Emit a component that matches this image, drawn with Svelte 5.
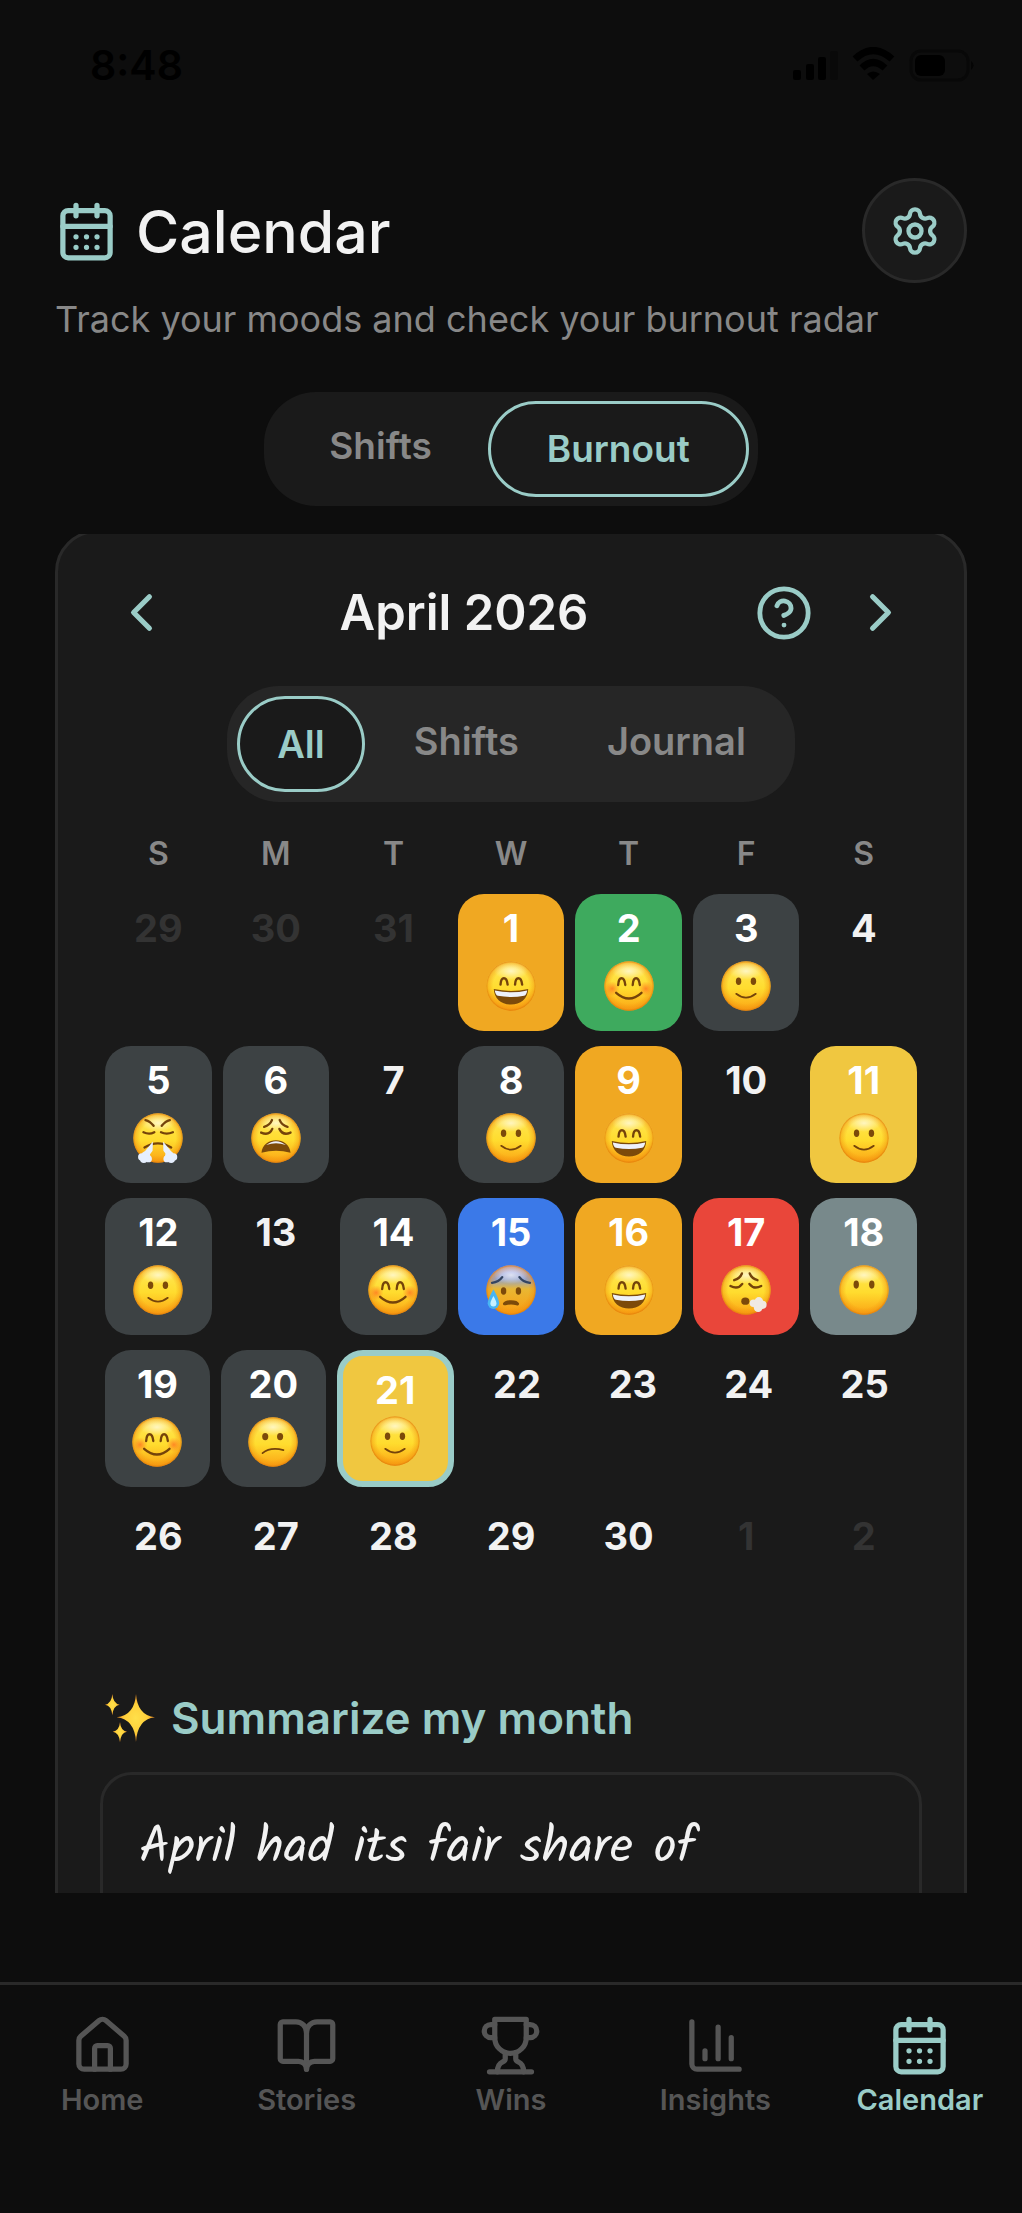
<script>
  let view = $state('Burnout');
  let filter = $state('All');

  const views = ['Shifts', 'Burnout'];
  const filters = ['All', 'Shifts', 'Journal'];
  const weekdays = ['S', 'M', 'T', 'W', 'T', 'F', 'S'];

  const d = (n, mood = '', tone = '', flag = '') => ({ n, mood, tone, flag });
  const weeks = [
    [d(29, '', '', 'out'), d(30, '', '', 'out'), d(31, '', '', 'out'), d(1, 'grin', 'orange'), d(2, 'blush', 'green'), d(3, 'smile', 'slate'), d(4)],
    [d(5, 'huff', 'slate'), d(6, 'weary', 'slate'), d(7), d(8, 'smile', 'slate'), d(9, 'grin', 'orange'), d(10), d(11, 'smile', 'yellow')],
    [d(12, 'smile', 'slate'), d(13), d(14, 'blush', 'slate'), d(15, 'anxious', 'blue'), d(16, 'grin', 'orange'), d(17, 'exhale', 'red'), d(18, 'blank', 'gray')],
    [d(19, 'blush', 'slate'), d(20, 'confused', 'slate'), d(21, 'smile', 'yellow', 'today'), d(22), d(23), d(24), d(25)],
    [d(26), d(27), d(28), d(29), d(30), d(1, '', '', 'out'), d(2, '', '', 'out')]
  ];

  const tabs = [
    { label: 'Home', icon: 'home' },
    { label: 'Stories', icon: 'book' },
    { label: 'Wins', icon: 'trophy' },
    { label: 'Insights', icon: 'chart' },
    { label: 'Calendar', icon: 'calendar', active: true }
  ];
</script>

{#snippet icon(name)}
  <svg class="icon" viewBox="0 0 24 24" aria-hidden="true">
    {#if name === 'calendar'}
      <path d="M8 2v4M16 2v4M3 10h18" />
      <rect x="3" y="4" width="18" height="18" rx="2" />
      <path d="M8 14h.01M12 14h.01M16 14h.01M8 18h.01M12 18h.01M16 18h.01" />
    {:else if name === 'home'}
      <path d="M15 21v-8a1 1 0 0 0-1-1h-4a1 1 0 0 0-1 1v8" />
      <path d="M3 10a2 2 0 0 1 .709-1.528l7-5.999a2 2 0 0 1 2.582 0l7 5.999A2 2 0 0 1 21 10v9a2 2 0 0 1-2 2H5a2 2 0 0 1-2-2z" />
    {:else if name === 'book'}
      <path d="M12 7v14" />
      <path d="M3 18a1 1 0 0 1-1-1V4a1 1 0 0 1 1-1h5a4 4 0 0 1 4 4 4 4 0 0 1 4-4h5a1 1 0 0 1 1 1v13a1 1 0 0 1-1 1h-6a3 3 0 0 0-3 3 3 3 0 0 0-3-3z" />
    {:else if name === 'trophy'}
      <path d="M6 9H4.5a2.5 2.5 0 0 1 0-5H6M18 9h1.5a2.5 2.5 0 0 0 0-5H18M4 22h16" />
      <path d="M10 14.66V17c0 .55-.47.98-.97 1.21C7.85 18.75 7 20.24 7 22M14 14.66V17c0 .55.47.98.97 1.21C16.15 18.75 17 20.24 17 22" />
      <path d="M18 2H6v7a6 6 0 0 0 12 0V2Z" />
    {:else if name === 'chart'}
      <path d="M3 3v16a2 2 0 0 0 2 2h16M18 17V9M13 17V5M8 17v-3" />
    {:else if name === 'left'}
      <path d="m15 18-6-6 6-6" />
    {:else if name === 'right'}
      <path d="m9 18 6-6-6-6" />
    {:else if name === 'help'}
      <circle cx="12" cy="12" r="10" />
      <path d="M9.09 9a3 3 0 0 1 5.83 1c0 2-3 3-3 3M12 17h.01" />
    {:else if name === 'gear'}
      <path d="M9.671 4.136a2.34 2.34 0 0 1 4.659 0 2.34 2.34 0 0 0 3.319 1.915 2.34 2.34 0 0 1 2.33 4.033 2.34 2.34 0 0 0 0 3.831 2.34 2.34 0 0 1-2.33 4.033 2.34 2.34 0 0 0-3.319 1.915 2.34 2.34 0 0 1-4.659 0 2.34 2.34 0 0 0-3.32-1.915 2.34 2.34 0 0 1-2.33-4.033 2.34 2.34 0 0 0 0-3.831A2.34 2.34 0 0 1 6.35 6.051a2.34 2.34 0 0 0 3.319-1.915" />
      <circle cx="12" cy="12" r="3" />
    {/if}
  </svg>
{/snippet}

{#snippet face(mood)}
  <svg class="face" viewBox="0 0 148 148" role="img" aria-label={mood}>
    <circle cx="74" cy="74" r="73" fill={mood === 'anxious' ? 'url(#chill)' : 'url(#skin)'} />
    <circle cx="74" cy="74" r="73" fill="url(#rim)" />
    <ellipse cx="74" cy="30" rx="50" ry="26" fill="url(#shine)" />
    {#if mood === 'grin'}
      <path class="line" d="M43 70Q44 51 53 51T64 70M86 70Q87 51 96 51T107 70" />
      <path class="dark" d="M23 83Q74 94 125 83C124 112 102 129 74 129S24 112 23 83Z" />
      <path fill="#eef1fb" d="M26 87Q74 98 122 87Q120 100 113 103Q74 110 35 103Q28 100 26 87Z" />
    {:else if mood === 'blush'}
      <circle cx="24" cy="82" r="22" fill="url(#cheek)" />
      <circle cx="124" cy="82" r="22" fill="url(#cheek)" />
      <path class="line" d="M42 71Q43 51 52 51T63 71M85 71Q86 51 95 51T106 71" />
      <path class="line" d="M36 94Q74 128 111 94" />
    {:else if mood === 'smile'}
      <ellipse class="dark" cx="52" cy="60" rx="8" ry="11" />
      <ellipse class="dark" cx="96" cy="60" rx="8" ry="11" />
      <path class="line thin" d="M45 97Q74 120 103 97" />
    {:else if mood === 'huff'}
      <path class="line" d="M37 21Q50 24 61 38M109 21Q96 24 85 38" />
      <path class="line" d="M31 57Q48 65 63 57M83 57Q99 65 118 57" />
      <path class="line" d="M34 102Q74 78 113 102" />
      <path fill="#e8f1ff" d="M59 84L58 112L46 128L28 122ZM89 84L90 112L102 128L120 122Z" />
      <g fill="#e6effe">
        <circle cx="26" cy="130" r="11" /><circle cx="38" cy="126" r="13" /><circle cx="46" cy="136" r="10" /><circle cx="32" cy="137" r="11" />
        <circle cx="120" cy="130" r="11" /><circle cx="108" cy="126" r="13" /><circle cx="100" cy="136" r="10" /><circle cx="113" cy="137" r="11" />
      </g>
    {:else if mood === 'weary'}
      <path class="line" d="M39 41Q56 36 62 21M85 21Q91 36 108 41" />
      <path class="line" d="M30 58Q54 68 63 47M84 47Q94 68 117 58" />
      <path class="dark" d="M31 118C34 68 114 68 117 118Q74 106 31 118Z" />
      <path fill="#eef1fb" d="M45 95Q74 72 103 95Q74 84 45 95Z" />
    {:else if mood === 'anxious'}
      <path class="line cold" d="M18 53Q38 50 48 36M99 36Q109 50 130 53" />
      <ellipse class="dark" cx="52" cy="77" rx="8" ry="11" />
      <ellipse class="dark" cx="96" cy="77" rx="8" ry="11" />
      <path class="dark" d="M50 114Q54 104 74 104T98 114Q98 122 90 119Q74 115 58 119Q50 121 50 114Z" />
      <path fill="#48b5f3" d="M22 72Q38 100 39 113A17 17 0 0 1 5 113Q6 100 22 72Z" />
      <path fill="#c7f0ff" d="M22 92Q31 108 31 114A9 9 0 0 1 13 114Q13 108 22 92Z" />
    {:else if mood === 'exhale'}
      <path class="line" d="M39 45Q56 40 62 25M85 25Q91 40 108 45" />
      <path class="line" d="M28 62Q50 74 63 56M84 56Q98 74 119 62" />
      <ellipse class="dark" cx="72" cy="107" rx="12" ry="11" />
      <g fill="#f0e9e2">
        <circle cx="96" cy="113" r="11" /><circle cx="112" cy="108" r="13" /><circle cx="123" cy="118" r="12" /><circle cx="110" cy="126" r="13" />
      </g>
    {:else if mood === 'blank'}
      <ellipse class="dark" cx="51" cy="58" rx="8" ry="12" />
      <ellipse class="dark" cx="97" cy="58" rx="8" ry="12" />
    {:else if mood === 'confused'}
      <ellipse class="dark" cx="51" cy="58" rx="9" ry="11" />
      <ellipse class="dark" cx="95" cy="58" rx="9" ry="11" />
      <path class="line thin" d="M43 107Q66 88 105 98" />
    {/if}
  </svg>
{/snippet}

<div class="app">
  <svg class="defs" aria-hidden="true">
    <defs>
      <linearGradient id="skin" x1="0" y1="0" x2="0" y2="1">
        <stop offset="0" stop-color="#ffe95a" /><stop offset=".55" stop-color="#ffdc2e" /><stop offset="1" stop-color="#fba214" />
      </linearGradient>
      <linearGradient id="chill" x1="0" y1="0" x2="0" y2="1">
        <stop offset="0" stop-color="#b4b6fa" /><stop offset=".28" stop-color="#94a3cc" /><stop offset=".48" stop-color="#e9b733" /><stop offset="1" stop-color="#fb9d12" />
      </linearGradient>
      <radialGradient id="rim">
        <stop offset=".72" stop-color="#f08a08" stop-opacity="0" /><stop offset=".92" stop-color="#ee8a0c" stop-opacity=".4" /><stop offset="1" stop-color="#dd7408" stop-opacity=".8" />
      </radialGradient>
      <radialGradient id="shine">
        <stop offset="0" stop-color="#fff" stop-opacity=".65" /><stop offset="1" stop-color="#fff" stop-opacity="0" />
      </radialGradient>
      <radialGradient id="cheek">
        <stop offset="0" stop-color="#ff5a1e" stop-opacity=".65" /><stop offset="1" stop-color="#ff6a20" stop-opacity="0" />
      </radialGradient>
      <radialGradient id="gold">
        <stop offset="0" stop-color="#ffe04a" /><stop offset=".6" stop-color="#ffcf3a" /><stop offset="1" stop-color="#f08a20" />
      </radialGradient>
    </defs>
  </svg>

  <div class="status">
    <span class="clock">8:48</span>
    <svg class="signals" viewBox="0 0 184 36" aria-hidden="true">
      <rect x="2" y="23" width="8" height="10" rx="2" />
      <rect x="15" y="17" width="8" height="16" rx="2" />
      <rect x="27" y="10" width="8" height="23" rx="2" />
      <rect class="faint" x="39" y="4" width="8" height="29" rx="2" />
      <path class="arc" d="M64 12Q82-5 101 12M71 21Q82 10 94 21" />
      <path d="M82 33L76 27Q82 22 89 27Z" />
      <rect class="shell" x="120" y="4" width="57" height="29" rx="10" />
      <rect x="124" y="8" width="30" height="21" rx="6" />
      <path class="nub" d="M180 14Q185 18 180 23Z" />
    </svg>
  </div>

  <header>
    <div class="headline">
      <h1>{@render icon('calendar')}Calendar</h1>
      <button class="settings" aria-label="Settings">{@render icon('gear')}</button>
    </div>
    <p>Track your moods and check your burnout radar</p>
  </header>

  <div class="pills views">
    {#each views as v}
      <button class:on={view === v} onclick={() => (view = v)}>{v}</button>
    {/each}
  </div>

  <main>
    <section class="card">
      <div class="month">
        <button class="step" aria-label="Previous month">{@render icon('left')}</button>
        <h2>April 2026</h2>
        <div class="tools">
          <button class="ask" aria-label="Help">{@render icon('help')}</button>
          <button class="step" aria-label="Next month">{@render icon('right')}</button>
        </div>
      </div>

      <div class="pills filters">
        {#each filters as f}
          <button class:on={filter === f} onclick={() => (filter = f)}>{f}</button>
        {/each}
      </div>

      <div class="days">
        <div class="week names">
          {#each weekdays as w}<span>{w}</span>{/each}
        </div>
        {#each weeks as week}
          <div class="week">
            {#each week as day}
              <button class="day {day.tone} {day.flag}">
                <span>{day.n}</span>
                {#if day.mood}{@render face(day.mood)}{/if}
              </button>
            {/each}
          </div>
        {/each}
      </div>

      <button class="summarize">
        <svg viewBox="0 0 150 147" aria-hidden="true">
          <path d="M93 0Q97 64 150 70Q97 76 93 144Q89 76 35 70Q89 64 93 0Z" />
          <path d="M22 0Q24 29 44 32Q24 35 22 64Q20 35 0 32Q20 29 22 0Z" />
          <path d="M45 84Q47 110 66 113Q47 116 45 145Q43 116 23 113Q43 110 45 84Z" />
        </svg>
        Summarize my month
      </button>
      <div class="summary">
        <p>April had its fair share of</p>
      </div>
    </section>
  </main>

  <nav>
    {#each tabs as tab}
      <a href="#{tab.icon}" class:active={tab.active}>
        {@render icon(tab.icon)}
        {tab.label}
      </a>
    {/each}
  </nav>
</div>

<style>
  :global(body) {
    margin: 0;
    background: #0d0d0d;
  }
  .app {
    --accent: #9accc7;
    --line: #292929;
    --muted: #888;
    display: flex;
    flex-direction: column;
    height: 100vh;
    background: #0d0d0d;
    color: #f2f2f2;
    font-family: Inter, 'Liberation Sans', sans-serif;
  }
  * {
    box-sizing: border-box;
  }
  h1, h2, p {
    margin: 0;
    font-weight: 600;
  }
  button {
    margin: 0;
    padding: 0;
    border: 0;
    background: none;
    color: inherit;
    font: inherit;
    cursor: pointer;
  }
  .defs {
    position: absolute;
    width: 0;
    height: 0;
  }
  .icon {
    display: block;
    width: 63px;
    height: 63px;
    flex: none;
    fill: none;
    stroke: currentColor;
    stroke-width: 2;
    stroke-linecap: round;
    stroke-linejoin: round;
  }

  .status {
    display: flex;
    flex: none;
    align-items: center;
    justify-content: space-between;
    height: 130px;
    padding: 0 47px 0 90px;
    color: #000;
  }
  .clock {
    font-size: 41px;
    font-weight: 600;
    line-height: 48px;
  }
  .signals {
    width: 184px;
    height: 36px;
  }
  .signals .faint {
    fill: #090909;
  }
  .signals .nub {
    fill: #050505;
  }
  .signals .arc {
    fill: none;
    stroke: #000;
    stroke-width: 7;
  }
  .signals .shell {
    fill: none;
    stroke: #080808;
    stroke-width: 3;
  }

  header {
    flex: none;
    padding: 48px 55px;
  }
  .headline {
    display: flex;
    align-items: center;
    justify-content: space-between;
  }
  h1 {
    display: flex;
    align-items: center;
    gap: 18px;
    padding-top: 2px;
    font-size: 59px;
    font-weight: 500;
    line-height: 76px;
  }
  h1 .icon,
  .settings,
  .month button {
    color: var(--accent);
  }
  .settings {
    display: grid;
    place-items: center;
    width: 105px;
    height: 105px;
    border: 3px solid var(--line);
    border-radius: 50%;
    background: #1a1a1a;
  }
  .settings .icon {
    width: 52px;
    height: 52px;
  }
  header p {
    margin-top: 11px;
    color: var(--muted);
    font-size: 36px;
    font-weight: 400;
    line-height: 50px;
  }

  .pills {
    display: flex;
    flex: none;
    align-items: flex-start;
    align-self: center;
    padding: 9px;
    border-radius: 52px;
    background: #1a1a1a;
    color: var(--muted);
    font-size: 37px;
    font-weight: 600;
    line-height: 48px;
  }
  .pills button {
    padding: 21px 56px;
    border-radius: 48px;
  }
  .pills .on {
    border: 3px solid var(--accent);
    background: #1a1a1a;
    color: var(--accent);
  }

  main {
    flex: 1;
    min-height: 0;
    margin: 28px 55px 89px;
    overflow: hidden;
  }
  .card {
    display: flex;
    flex-direction: column;
    margin-top: -4px;
    padding: 48px 42px 80px;
    border: 3px solid var(--line);
    border-radius: 42px;
    background: #1a1a1a;
  }
  .month,
  .tools {
    display: flex;
    align-items: center;
    justify-content: space-between;
  }
  .tools {
    gap: 16px;
  }
  .step,
  .ask {
    padding: 0 10px;
  }
  .ask .icon {
    width: 58px;
    height: 58px;
  }
  h2 {
    font-size: 49px;
    line-height: 63px;
  }
  .filters {
    gap: 10px;
    margin-top: 42px;
    padding: 10px;
    background: #262626;
    font-size: 38px;
  }
  .filters button {
    padding: 21px 39px;
  }
  .filters .on {
    padding: 21px 37px;
  }

  .days {
    display: flex;
    flex-direction: column;
    gap: 15px;
    margin: 31px 5px 0;
  }
  .week {
    display: flex;
    gap: 11px;
  }
  .names {
    margin-bottom: 4px;
    color: var(--muted);
    font-size: 32px;
    font-weight: 600;
    line-height: 42px;
    text-align: center;
  }
  .names span {
    flex: 1 1 0;
  }
  .day {
    display: flex;
    flex: 1 1 0;
    flex-direction: column;
    align-items: center;
    justify-content: space-between;
    height: 137px;
    padding: 10px 0 20px;
    border-radius: 26px;
    font-size: 38px;
    font-weight: 700;
    line-height: 48px;
  }
  .out {
    color: #333;
  }
  .orange { background: #f0a822; }
  .green { background: #3eaa5e; }
  .slate { background: #3d4244; }
  .yellow { background: #f0c740; }
  .blue { background: #3b79e8; }
  .red { background: #e9463a; }
  .gray { background: #78898b; }
  .orange, .green, .slate, .yellow, .blue, .red, .gray {
    color: #fff;
  }
  .today {
    padding-bottom: 15px;
    border: 6px solid var(--accent);
  }
  .face {
    width: 50px;
    height: 50px;
  }
  .face .dark {
    fill: #7c4a0a;
  }
  .face .line {
    fill: none;
    stroke: #74430a;
    stroke-width: 7;
    stroke-linecap: round;
  }
  .face .thin {
    stroke-width: 5;
  }
  .face .cold {
    stroke: #344562;
  }

  .summarize {
    display: flex;
    align-items: center;
    align-self: flex-start;
    gap: 16px;
    margin: 49px 5px 24px;
    color: var(--accent);
    font-size: 44px;
    font-weight: 600;
    line-height: 60px;
  }
  .summarize svg {
    width: 50px;
    height: 49px;
    fill: url(#gold);
  }
  .summary {
    padding: 44px 36px;
    border: 3px solid var(--line);
    border-radius: 32px;
  }
  .summary p {
    font-family: Kalam, Lato, sans-serif;
    font-size: 51px;
    font-weight: 400;
    line-height: 60px;
  }

  nav {
    display: grid;
    flex: none;
    grid-template-columns: repeat(5, 1fr);
    height: 231px;
    padding-top: 29px;
    border-top: 3px solid var(--line);
  }
  nav a {
    display: flex;
    flex-direction: column;
    align-items: center;
    gap: 5px;
    color: #555;
    font-size: 29px;
    font-weight: 600;
    line-height: 36px;
    text-decoration: none;
  }
  nav .active {
    color: var(--accent);
  }
</style>
